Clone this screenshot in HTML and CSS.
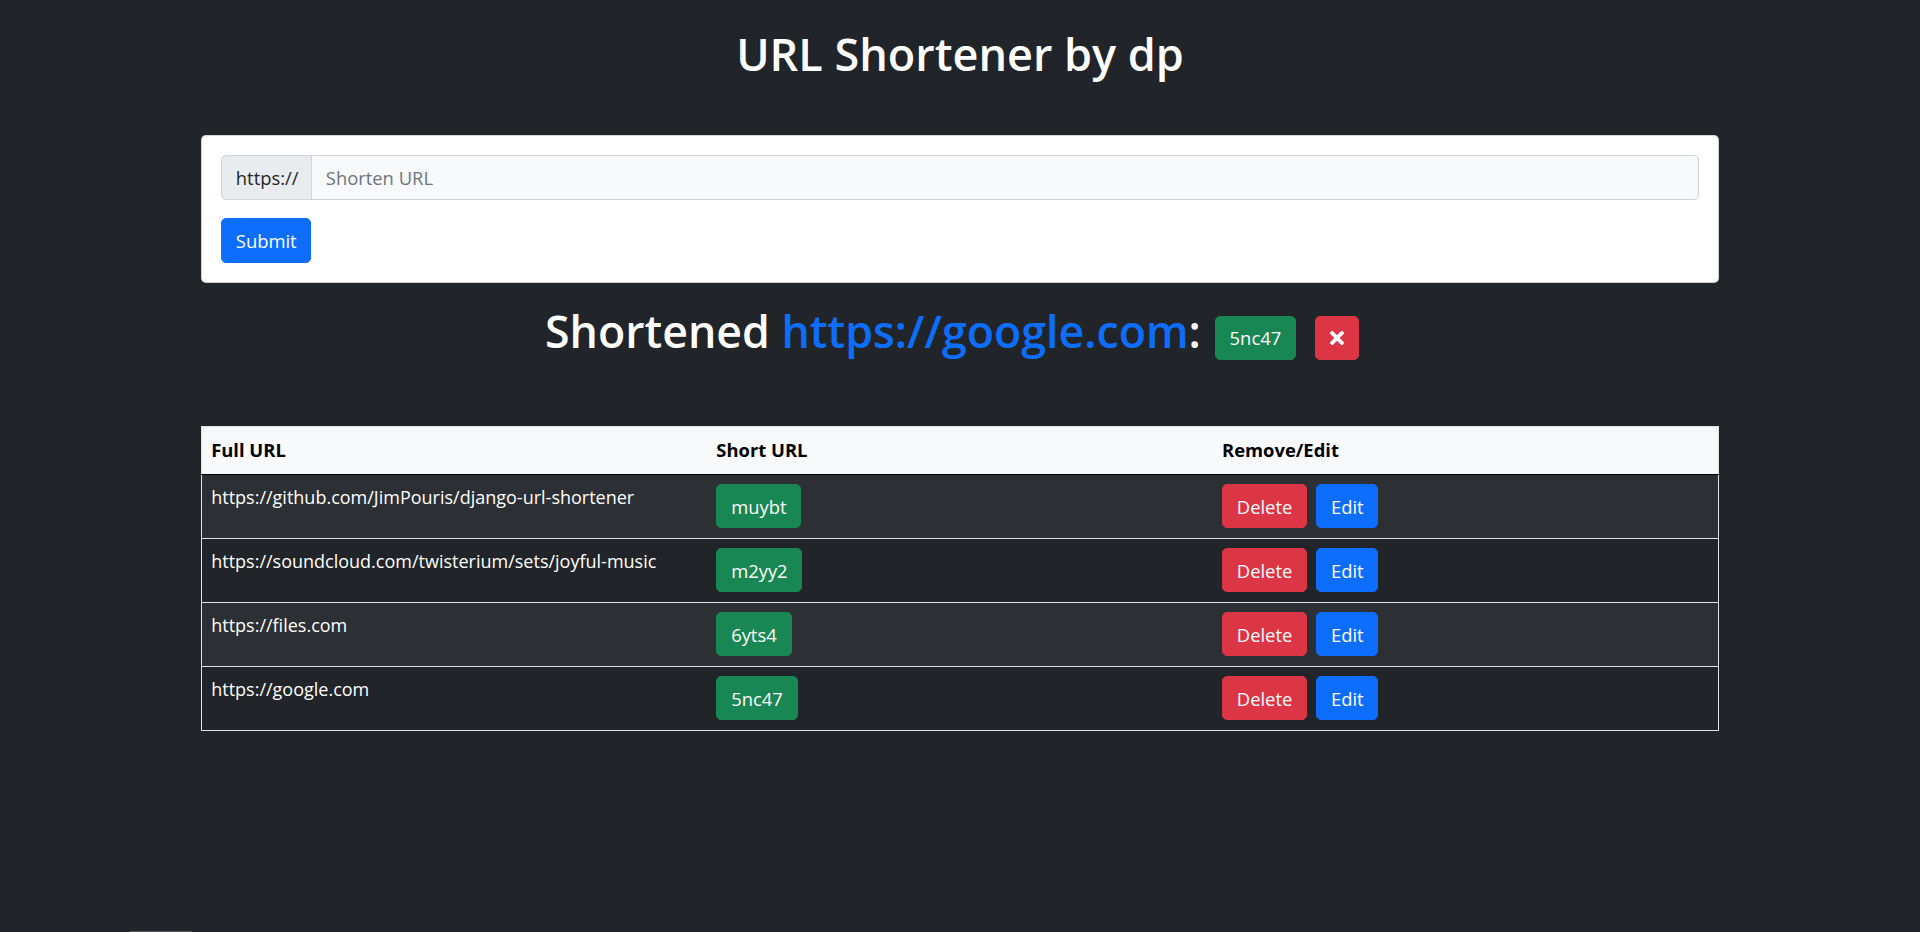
FILE: index.html
```html
<!DOCTYPE html>
<html lang="en">
<head>
<meta charset="utf-8">
<title>URL Shortener by dp</title>
<link rel="stylesheet" href="styles.css">
</head>
<body>
<div class="container">
  <h1 class="title">URL Shortener by dp</h1>
  <form class="card">
    <div class="input-group">
      <span class="addon">https://</span>
      <input class="url-input" type="text" placeholder="Shorten URL">
    </div>
    <button class="btn btn-primary" type="button">Submit</button>
  </form>
  <h2 class="result">
    <span class="result-text">Shortened <a class="result-link" href="#">https://google.com</a>:</span>
    <a class="btn btn-success result-code" href="#">5nc47</a>
    <button class="btn btn-danger btn-close-x" type="button" aria-label="Close"><svg class="x-icon" viewBox="0 80 352 352" width="14" height="14"><path fill="#fff" d="M242.72 256l100.07-100.07c12.28-12.28 12.28-32.19 0-44.48l-22.24-22.24c-12.28-12.28-32.19-12.28-44.48 0L176 189.28 75.930 89.21c-12.28-12.28-32.19-12.28-44.48 0L9.21 111.45c-12.28 12.28-12.28 32.19 0 44.48L109.28 256 9.21 356.07c-12.28 12.28-12.28 32.19 0 44.48l22.24 22.24c12.28 12.28 32.2 12.28 44.48 0L176 322.72l100.07 100.07c12.28 12.28 32.2 12.28 44.48 0l22.24-22.24c12.28-12.28 12.28-32.19 0-44.48L242.72 256z"/></svg></button>
  </h2>
  <table class="table">
    <thead>
      <tr><th>Full URL</th><th>Short URL</th><th>Remove/Edit</th></tr>
    </thead>
    <tbody>
      <tr>
        <td>https://github.com/JimPouris/django-url-shortener</td>
        <td><div class="cell-flex"><a class="btn btn-success" href="#">muybt</a></div></td>
        <td><div class="cell-flex"><a class="btn btn-danger" href="#">Delete</a><a class="btn btn-primary" href="#">Edit</a></div></td>
      </tr>
      <tr>
        <td>https://soundcloud.com/twisterium/sets/joyful-music</td>
        <td><div class="cell-flex"><a class="btn btn-success" href="#">m2yy2</a></div></td>
        <td><div class="cell-flex"><a class="btn btn-danger" href="#">Delete</a><a class="btn btn-primary" href="#">Edit</a></div></td>
      </tr>
      <tr>
        <td>https://files.com</td>
        <td><div class="cell-flex"><a class="btn btn-success" href="#">6yts4</a></div></td>
        <td><div class="cell-flex"><a class="btn btn-danger" href="#">Delete</a><a class="btn btn-primary" href="#">Edit</a></div></td>
      </tr>
      <tr>
        <td>https://google.com</td>
        <td><div class="cell-flex"><a class="btn btn-success" href="#">5nc47</a></div></td>
        <td><div class="cell-flex"><a class="btn btn-danger" href="#">Delete</a><a class="btn btn-primary" href="#">Edit</a></div></td>
      </tr>
    </tbody>
  </table>
</div>
<div class="scroll-thumb"></div>
</body>
</html>
```

FILE: styles.css
```css
* { box-sizing: border-box; }
html, body { margin: 0; }
body {
  background: #212529;
  color: #fff;
  font-family: "Open Sans", "Noto Sans", sans-serif;
  font-size: 18.4px;
  line-height: 1.5;
}
.container { width: 1518px; margin: 0 auto; }

.title {
  margin: 26.5px 0 54.5px;
  font-size: 45px;
  font-weight: 600;
  line-height: 54px;
  text-align: center;
  color: #fff;
}

.card {
  display: flex;
  flex-direction: column;
  align-items: flex-start;
  gap: 18px;
  margin: 0;
  background: #fff;
  border: 1px solid rgba(0,0,0,.175);
  border-radius: 5px;
  padding: 19px;
}
.input-group { display: flex; width: 100%; height: 45px; }
.addon {
  display: flex;
  align-items: center;
  width: 91px;
  padding: 0 13.8px;
  background: #e9ecef;
  border: 1px solid #ced4da;
  border-radius: 5px 0 0 5px;
  color: #212529;
}
.url-input {
  flex: 1;
  margin-left: -1px;
  border: 1px solid #ced4da;
  border-radius: 0 5px 5px 0;
  background: #f8f9fa;
  padding: 0 13.8px;
  font: inherit;
  color: #212529;
  outline: none;
}
.url-input::placeholder { color: #6c757d; }

.btn {
  display: inline-flex;
  align-items: center;
  justify-content: center;
  height: 44px;
  padding: 0 13.8px;
  border: 1px solid transparent;
  border-radius: 5px;
  font-family: inherit;
  font-size: 18.4px;
  font-weight: 400;
  line-height: 1.5;
  color: #fff;
  text-decoration: none;
  cursor: pointer;
}
.btn-primary { background: #0d6efd; border-color: #0d6efd; }
.btn-success { background: #198754; border-color: #198754; }
.btn-danger { background: #dc3545; border-color: #dc3545; }
.card .btn { height: 45px; }

.result {
  display: flex;
  justify-content: center;
  align-items: center;
  margin: 20.5px 0 53.5px;
  padding-right: 16px;
  font-size: 44.7px;
  font-weight: 600;
  line-height: 54px;
}
.result-text { padding-bottom: 14.9px; }
.result-link { color: #0d6efd; text-decoration: none; }
.result-code { margin-left: 14px; }
.btn-close-x { margin-left: 19px; width: 44px; padding: 0; }
.x-icon { display: block; }

.table {
  width: 100%;
  border-collapse: collapse;
  table-layout: fixed;
  border: 1px solid #dee2e6;
}
.table th, .table td {
  width: 33.333%;
  padding: 9.5px 9.2px;
  text-align: left;
  vertical-align: top;
}
.table th {
  background: #f8f9fa;
  color: #000;
  font-weight: 700;
  line-height: 28px;
  border-bottom: 1px solid #000;
}
.table td {
  border-bottom: 1px solid #dee2e6;
  font-size: 18px;
  line-height: 27.6px;
}
.table tbody tr:nth-child(odd) td { background: #2c3034; }
.table tbody tr:nth-child(even) td { background: #212529; }
.cell-flex { display: flex; gap: 9px; }

.scroll-thumb {
  position: fixed;
  left: 130px;
  bottom: 0;
  width: 62px;
  height: 1px;
  background: #5a5a5a;
}
```
